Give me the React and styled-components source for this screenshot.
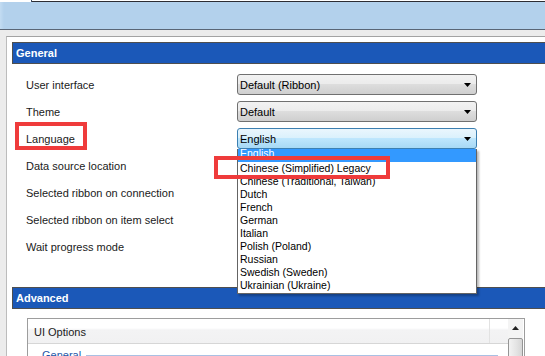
import React from 'react';
import styled, { createGlobalStyle } from 'styled-components';

const GlobalStyle = createGlobalStyle`
  html, body {
    margin: 0;
    padding: 0;
    overflow: hidden;
    background: #ffffff;
  }
  body {
    font-family: "Liberation Sans", Arial, sans-serif;
    font-size: 11px;
    color: #1a1a1a;
  }
`;

const Window = styled.div`
  width: 545px;
  height: 356px;
  display: flex;
  flex-direction: column;
  overflow: hidden;
`;

const TabEdge = styled.div`
  flex: none;
  height: 2px;
  display: flex;
`;

const TabStub = styled.div`
  width: 31px;
  background: #ffffff;
  border-right: 1px solid #3b4b63;
`;

const TabLine = styled.div`
  flex: 1;
  background: #ffffff;
  border-bottom: 1px solid #2d2d33;
`;

const RibbonBand = styled.div`
  flex: none;
  height: 27px;
  background: linear-gradient(to right, #c3dcf2 0, #b3d1ec 4px, #b3d1ec 100%);
  border-bottom: 1px solid #5a6676;
`;

const Workspace = styled.div`
  flex: 1 0 auto;
  background: #ececec;
  padding: 6px 0 0 6px;
  display: flex;
`;

const Frame = styled.div`
  flex: 1;
  background: #ffffff;
  border-top: 1px solid #a3a3a3;
  border-left: 1px solid #bcbcbc;
  padding: 5px 0 0 5px;
  display: flex;
  flex-direction: column;
`;

const SectionHeader = styled.div`
  flex: none;
  height: 22px;
  box-sizing: border-box;
  border: 1px solid #4f4f4f;
  border-right: none;
  background: #1b58b8;
  color: #ffffff;
  font-weight: bold;
  font-size: 11px;
  line-height: 20px;
  padding-left: 3px;
`;

const Form = styled.div`
  flex: none;
  display: grid;
  grid-template-columns: 211px 240px;
  grid-auto-rows: 27px;
  padding: 7px 0 0 14px;
  margin-bottom: 27px;
`;

const Label = styled.div`
  position: relative;
  display: flex;
  align-items: center;
  font-size: 11px;
  color: #1a1a1a;
`;

const Cell = styled.div`
  position: relative;
  display: flex;
  align-items: center;
  z-index: ${p => (p.$open ? 10 : 1)};
`;

const ComboWrap = styled.div`
  position: relative;
`;

const Combo = styled.div`
  width: 240px;
  height: 21px;
  box-sizing: border-box;
  border: 1px solid ${p => (p.$hot ? '#3c7fb1' : '#707070')};
  border-radius: 3px;
  background: ${p =>
    p.$hot
      ? 'linear-gradient(#eaf6fd 0%, #d9f0fc 50%, #bee6fd 50%, #a7d9f5 100%)'
      : 'linear-gradient(#f2f2f2 0%, #ebebeb 50%, #dddddd 50%, #cfcfcf 100%)'};
  display: flex;
  align-items: center;
  justify-content: space-between;
  padding: 0 4px 0 2px;
  font-size: 11px;
  color: #000000;
`;

const Arrow = () => (
  <svg width="7" height="4" viewBox="0 0 7 4">
    <path d="M0 0 H7 L3.5 4 Z" fill="#000" />
  </svg>
);

const ArrowBox = styled.span`
  display: flex;
  width: 9px;
  justify-content: center;
`;

const List = styled.div`
  position: absolute;
  left: 0;
  top: 100%;
  width: 240px;
  height: 145px;
  box-sizing: border-box;
  background: #ffffff;
  border: 1px solid #646464;
  border-top: none;
  box-shadow: 2px 2px 2px rgba(0, 0, 0, 0.28);
  overflow: hidden;
`;

const Item = styled.div`
  height: 13px;
  line-height: 13px;
  padding-left: 2px;
  font-size: 10.5px;
  white-space: nowrap;
  overflow: hidden;
  background: ${p => (p.$selected ? '#3399ff' : 'transparent')};
  color: ${p => (p.$selected ? '#ffffff' : '#000000')};

  span {
    display: block;
    transform: translateY(${p => (p.$selected ? '-2px' : '0')});
  }
`;

const Marker = styled.div`
  position: absolute;
  left: ${p => p.$x}px;
  top: ${p => p.$y}px;
  width: ${p => p.$w}px;
  height: ${p => p.$h}px;
  box-sizing: border-box;
  border: 4px solid #ef3b3b;
  pointer-events: none;
  z-index: 20;
`;

const OptionsPanel = styled.div`
  flex: none;
  margin: 9px 0 0 15px;
  width: 498px;
  height: 60px;
  box-sizing: border-box;
  border: 1px solid #9d9d9d;
  display: flex;
`;

const OptionsMain = styled.div`
  flex: 1;
  display: flex;
  flex-direction: column;
`;

const OptionsHead = styled.div`
  height: 25px;
  box-sizing: border-box;
  display: flex;
  border-bottom: 1px solid #d6d6d6;
  background: linear-gradient(#ffffff 0, #ffffff 9px, #f3f3f4 11px, #f1f1f2 100%);
`;

const HeadCol = styled.div`
  width: ${p => (p.$w ? `${p.$w}px` : 'auto')};
  flex: ${p => (p.$w ? 'none' : 1)};
  border-right: ${p => (p.$w ? '1px solid #e2e2e2' : 'none')};
  padding: 7px 0 0 6px;
  font-size: 11px;
  color: #1a1a1a;
`;

const GroupRow = styled.div`
  display: flex;
  align-items: center;
  height: 18px;
  margin-top: 2px;
  padding: 0 10px 0 14px;
`;

const GroupTitle = styled.span`
  color: #2456a8;
  font-size: 11px;
`;

const GroupRule = styled.div`
  flex: 1;
  height: 1px;
  margin-left: 5px;
  background: #a9c0e3;
`;

const ScrollBar = styled.div`
  width: 15px;
  margin-right: 1px;
  display: flex;
  flex-direction: column;
  background: #f4f4f4;
`;

const ScrollButton = styled.div`
  height: 18px;
  display: flex;
  align-items: center;
  justify-content: center;
`;

const Thumb = styled.div`
  margin-top: 1px;
  flex: 1;
  border: 1px solid #959595;
  border-radius: 2px;
  background: linear-gradient(to right, #f3f3f3, #e3e3e3 60%, #d6d6d6);
`;

const rows = [
  { label: 'User interface', value: 'Default (Ribbon)' },
  { label: 'Theme', value: 'Default' },
  { label: 'Language', value: 'English', open: true },
  { label: 'Data source location', value: '' },
  { label: 'Selected ribbon on connection', value: '' },
  { label: 'Selected ribbon on item select', value: '' },
  { label: 'Wait progress mode', value: '' }
];

const languages = [
  'English',
  'Chinese (Simplified) Legacy',
  'Chinese (Traditional, Taiwan)',
  'Dutch',
  'French',
  'German',
  'Italian',
  'Polish (Poland)',
  'Russian',
  'Swedish (Sweden)',
  'Ukrainian (Ukraine)'
];

const App = () => {
  return (
    <Window>
      <GlobalStyle />
      <TabEdge>
        <TabStub />
        <TabLine />
      </TabEdge>
      <RibbonBand />
      <Workspace>
        <Frame>
          <SectionHeader>General</SectionHeader>
          <Form>
            {rows.map(row => (
              <React.Fragment key={row.label}>
                <Label>
                  {row.label}
                  {row.open && <Marker $x={-11} $y={-3} $w={72} $h={28} />}
                </Label>
                <Cell $open={row.open}>
                  <ComboWrap>
                    <Combo $hot={row.open}>
                      <span>{row.value}</span>
                      <ArrowBox>
                        <Arrow />
                      </ArrowBox>
                    </Combo>
                    {row.open && (
                      <>
                        <List>
                          {languages.map((lang, i) => (
                            <Item key={lang} $selected={i === 0}>
                              <span>{lang}</span>
                            </Item>
                          ))}
                        </List>
                        <Marker $x={-23} $y={28} $w={176} $h={23} />
                      </>
                    )}
                  </ComboWrap>
                </Cell>
              </React.Fragment>
            ))}
          </Form>
          <SectionHeader>Advanced</SectionHeader>
          <OptionsPanel>
            <OptionsMain>
              <OptionsHead>
                <HeadCol $w={455}>UI Options</HeadCol>
                <HeadCol />
              </OptionsHead>
              <GroupRow>
                <GroupTitle>General</GroupTitle>
                <GroupRule />
              </GroupRow>
            </OptionsMain>
            <ScrollBar>
              <ScrollButton>
                <svg width="7" height="4" viewBox="0 0 7 4">
                  <path d="M0 4 H7 L3.5 0 Z" fill="#222" />
                </svg>
              </ScrollButton>
              <Thumb />
            </ScrollBar>
          </OptionsPanel>
        </Frame>
      </Workspace>
    </Window>
  );
};

export default App;
